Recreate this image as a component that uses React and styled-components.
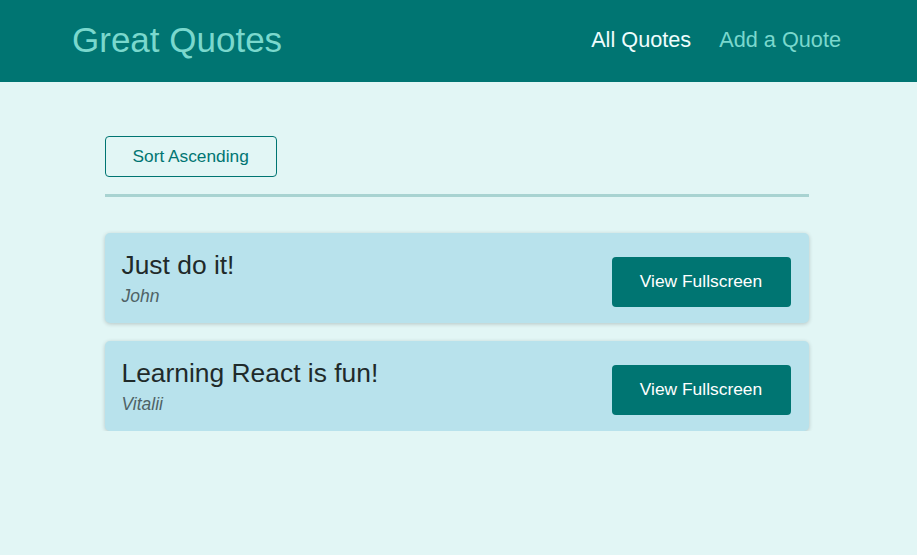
import React from "react";
import styled, { createGlobalStyle } from "styled-components";

const Global = createGlobalStyle`
  * { box-sizing: border-box; }
  html, body { margin: 0; padding: 0; }
  body {
    background: #e2f6f5;
    font-family: "Liberation Sans", Arial, Helvetica, sans-serif;
  }
`;

const Header = styled.header`
  height: 82px;
  background: #007572;
  display: flex;
  align-items: center;
  justify-content: space-between;
  padding: 0 76px 0 72px;
`;

const Logo = styled.div`
  font-size: 35px;
  color: #7ad8cd;
  margin-top: -2px;
`;

const Nav = styled.nav`
  display: flex;
  gap: 28px;
  margin-top: -2px;
`;

const NavLink = styled.a`
  font-size: 21.7px;
  text-decoration: none;
  color: ${(p) => (p.$active ? "#effdfd" : "#7ad8cd")};
  cursor: pointer;
`;

const Main = styled.main`
  width: 704px;
  margin: 54px auto 0;
  position: relative;
  left: -2px;
`;

const SortBar = styled.div`
  padding-bottom: 17px;
  border-bottom: 3px solid #a8d3d1;
`;

const SortButton = styled.button`
  height: 41px;
  padding: 0 27px;
  background: transparent;
  border: 1px solid #007572;
  border-radius: 4px;
  color: #007572;
  font-family: inherit;
  font-size: 17.3px;
  cursor: pointer;
`;

const List = styled.ul`
  list-style: none;
  margin: 36px 0 0;
  padding: 0;
  display: flex;
  flex-direction: column;
  gap: 18px;
`;

const Card = styled.li`
  background: #b8e2ec;
  border-radius: 5px;
  box-shadow: 0 1px 4px rgba(0, 0, 0, 0.2);
  display: flex;
  align-items: center;
  justify-content: space-between;
  padding: 17px 18px 16px 17px;
`;

const Figure = styled.figure`
  margin: 0;
  display: flex;
  flex-direction: column;
  gap: 5px;
`;

const Quote = styled.blockquote`
  margin: 0;
  font-size: 26.4px;
  color: #1f2a2a;
`;

const Author = styled.figcaption`
  font-size: 17.5px;
  font-style: italic;
  color: #4f6266;
`;

const ViewButton = styled.a`
  display: flex;
  align-items: center;
  justify-content: center;
  width: 179px;
  height: 50px;
  margin-top: 6px;
  background: #007572;
  color: #ffffff;
  border-radius: 4px;
  font-size: 17.4px;
  text-decoration: none;
  cursor: pointer;
`;

const quotes = [
  { id: 1, text: "Just do it!", author: "John" },
  { id: 2, text: "Learning React is fun!", author: "Vitalii" },
];

export default function App() {
  return (
    <>
      <Global />
      <Header>
        <Logo>Great Quotes</Logo>
        <Nav>
          <NavLink $active>All Quotes</NavLink>
          <NavLink>Add a Quote</NavLink>
        </Nav>
      </Header>
      <Main>
        <SortBar>
          <SortButton>Sort Ascending</SortButton>
        </SortBar>
        <List>
          {quotes.map((q) => (
            <Card key={q.id}>
              <Figure>
                <Quote>{q.text}</Quote>
                <Author>{q.author}</Author>
              </Figure>
              <ViewButton>View Fullscreen</ViewButton>
            </Card>
          ))}
        </List>
      </Main>
    </>
  );
}
